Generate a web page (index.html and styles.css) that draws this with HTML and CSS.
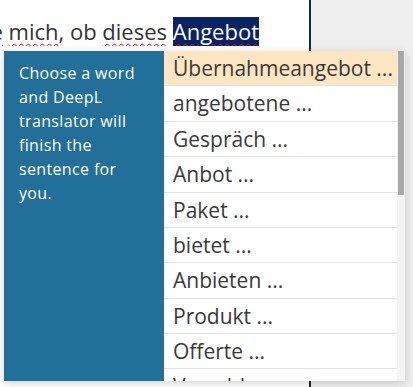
FILE: index.html
```html
<!DOCTYPE html>
<html lang="de">
<head>
<meta charset="utf-8">
<link rel="stylesheet" href="styles.css">
</head>
<body>
<div class="page">
  <div class="editor">
    <div class="line">
      <span class="text"><span class="err">frage</span> <span class="err">mich</span>, ob <span class="err">dieses</span> <span class="sel err">Angebot</span></span>
    </div>
  </div>
  <div class="divider"></div>
  <div class="side"></div>
</div>
<div class="popup">
  <div class="hint">Choose a word and DeepL translator will finish the sentence for you.</div>
  <div class="list">
    <div class="items">
      <div class="item active">Übernahmeangebot ...</div>
      <div class="item">angebotene ...</div>
      <div class="item">Gespräch ...</div>
      <div class="item">Anbot ...</div>
      <div class="item">Paket ...</div>
      <div class="item">bietet ...</div>
      <div class="item">Anbieten ...</div>
      <div class="item">Produkt ...</div>
      <div class="item">Offerte ...</div>
      <div class="item">Vorschlag ...</div>
    </div>
    <div class="scrollbar"><div class="thumb"></div></div>
  </div>
</div>
</body>
</html>
```
FILE: styles.css
```css
html, body {
  margin: 0;
  padding: 0;
  height: 100%;
  overflow: hidden;
}
body {
  font-family: "Open Sans", sans-serif;
  background: #efefef;
}
.page {
  display: flex;
  height: 387px;
}
.editor {
  width: 309px;
  background: #ffffff;
  padding-top: 17px;
  box-sizing: border-box;
}
.line {
  width: 259px;
  display: flex;
  justify-content: flex-end;
  overflow: hidden;
}
.text {
  white-space: nowrap;
  font-size: 22px;
  line-height: 29px;
  color: #333333;
}
.err {
  text-decoration: underline wavy #ff0000;
  text-decoration-thickness: 1px;
  text-underline-offset: 3px;
}
.sel {
  background: #0b2266;
  color: #ffffff;
}
.divider {
  width: 2px;
  background: #0f2a48;
}
.side {
  flex: 1;
  background: #efefef;
}
.popup {
  position: absolute;
  left: 4px;
  top: 51px;
  width: 401px;
  height: 330px;
  display: flex;
  box-shadow: 0 2px 8px rgba(0, 0, 0, 0.18);
}
.hint {
  width: 160px;
  flex: none;
  box-sizing: border-box;
  background: #226f9a;
  color: #ffffff;
  padding: 10px 22px 0 15px;
  font-family: "Open Sans", sans-serif;
  font-size: 16px;
  letter-spacing: 0.35px;
  line-height: 24px;
}
.list {
  flex: 1;
  display: flex;
  background: #ffffff;
  overflow: hidden;
}
.items {
  flex: 1;
}
.item {
  height: 35.375px;
  box-sizing: border-box;
  border-bottom: 1px solid #e2e2e2;
  padding-left: 9px;
  font-size: 21px;
  line-height: 35px;
  color: #3a3a3a;
  white-space: nowrap;
}
.item.active {
  background: #fde6c1;
}
.scrollbar {
  width: 8px;
  background: #f3f3f3;
  padding-left: 1px;
  box-sizing: border-box;
}
.thumb {
  width: 6px;
  height: 144px;
  background: #a8a8a8;
}
```
